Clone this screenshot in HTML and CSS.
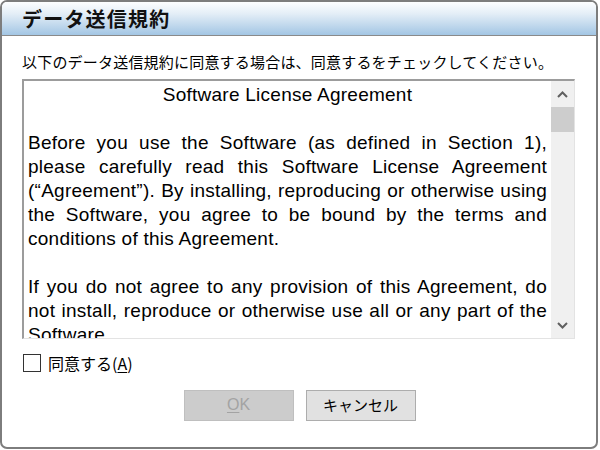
FILE: index.html
```html
<!DOCTYPE html>
<html lang="ja">
<head>
<meta charset="utf-8">
<title>データ送信規約</title>
<link rel="stylesheet" href="styles.css">
</head>
<body>
<div class="window">
  <div class="titlebar">データ送信規約</div>
  <div class="content">
    <div class="instruction">以下のデータ送信規約に同意する場合は、同意するをチェックしてください。</div>
    <div class="textbox">
      <div class="text">
        <p class="heading">Software License Agreement</p>
        <p>Before you use the Software (as defined in Section 1), please carefully read this Software License Agreement (“Agreement”). By installing, reproducing or otherwise using the Software, you agree to be bound by the terms and conditions of this Agreement.</p>
        <p>If you do not agree to any provision of this Agreement, do not install, reproduce or otherwise use all or any part of the Software.</p>
      </div>
      <div class="scrollbar">
        <div class="arrow">
          <svg width="11" height="7" viewBox="0 0 11 7"><polyline points="1,6 5.5,1.5 10,6" fill="none" stroke="#606060" stroke-width="2"/></svg>
        </div>
        <div class="thumb"></div>
        <div class="track"></div>
        <div class="arrow">
          <svg width="11" height="7" viewBox="0 0 11 7"><polyline points="1,1 5.5,5.5 10,1" fill="none" stroke="#606060" stroke-width="2"/></svg>
        </div>
      </div>
    </div>
    <label class="agree">
      <span class="checkbox"></span>
      <span class="agree-label">同意する(<u>A</u>)</span>
    </label>
    <div class="buttons">
      <div class="btn disabled"><u>O</u>K</div>
      <div class="btn">キャンセル</div>
    </div>
  </div>
</div>
</body>
</html>
```

FILE: styles.css
```css
html, body {
  margin: 0;
  padding: 0;
  background: #ffffff;
}

body {
  font-family: "Noto Sans CJK JP", "Liberation Sans", sans-serif;
  color: #000;
}

.window {
  box-sizing: border-box;
  width: 598px;
  height: 449px;
  border: 2px solid #7d7d7d;
  border-radius: 7px;
  background: #ffffff;
  overflow: hidden;
  display: flex;
  flex-direction: column;
}

.titlebar {
  height: 33px;
  border-bottom: 1px solid #8a8a8a;
  background: linear-gradient(to bottom, #fdfeff 0%, #e4eef7 35%, #a3c6e4 100%);
  font-weight: bold;
  font-size: 20px;
  line-height: 33px;
  padding-left: 20px;
  letter-spacing: 1.2px;
  color: #111;
}

.content {
  padding: 16px 21px 0 20px;
  display: flex;
  flex-direction: column;
}

.instruction {
  font-size: 15px;
  line-height: 20px;
  letter-spacing: 0.2px;
  white-space: nowrap;
}

.textbox {
  margin-top: 7px;
  height: 260px;
  box-sizing: border-box;
  border-top: 2px solid #9c9c9c;
  border-left: 2px solid #9c9c9c;
  border-right: 1px solid #e3e3e3;
  border-bottom: 1px solid #e3e3e3;
  display: flex;
  overflow: hidden;
}

.text {
  flex: 1;
  overflow: hidden;
  padding: 2px 4px 0 4px;
  font-family: "Liberation Sans", Arial, sans-serif;
  font-size: 19px;
  line-height: 24px;
  letter-spacing: 0.25px;
  text-align: justify;
}

.text p {
  margin: 0 0 24px 0;
}

.text .heading {
  text-align: center;
}

.scrollbar {
  width: 23px;
  background: #f0f0f0;
  display: flex;
  flex-direction: column;
}

.arrow {
  height: 26px;
  display: flex;
  align-items: center;
  justify-content: center;
}

.thumb {
  height: 25px;
  background: #cdcdcd;
}

.track {
  flex: 1;
}

.agree {
  margin-top: 14px;
  display: flex;
  align-items: center;
  gap: 7px;
  padding-left: 1px;
}

.checkbox {
  box-sizing: border-box;
  width: 18px;
  height: 18px;
  border: 1px solid #333333;
  background: #ffffff;
}

.agree-label {
  font-size: 16px;
  line-height: 20px;
}

.agree-label u {
  text-underline-offset: 2px;
}

.buttons {
  margin-top: 17px;
  display: flex;
  justify-content: center;
  gap: 12px;
  padding-left: 2px;
}

.btn {
  box-sizing: border-box;
  width: 110px;
  height: 31px;
  border: 1px solid #adadad;
  background: #e1e1e1;
  font-size: 15px;
  line-height: 28px;
  text-align: center;
}

.btn.disabled {
  background: #cccccc;
  border-color: #bfbfbf;
  color: #a3a3a3;
  font-family: "Liberation Sans", sans-serif;
  font-size: 16px;
}

.btn u {
  text-underline-offset: 2px;
}
```
